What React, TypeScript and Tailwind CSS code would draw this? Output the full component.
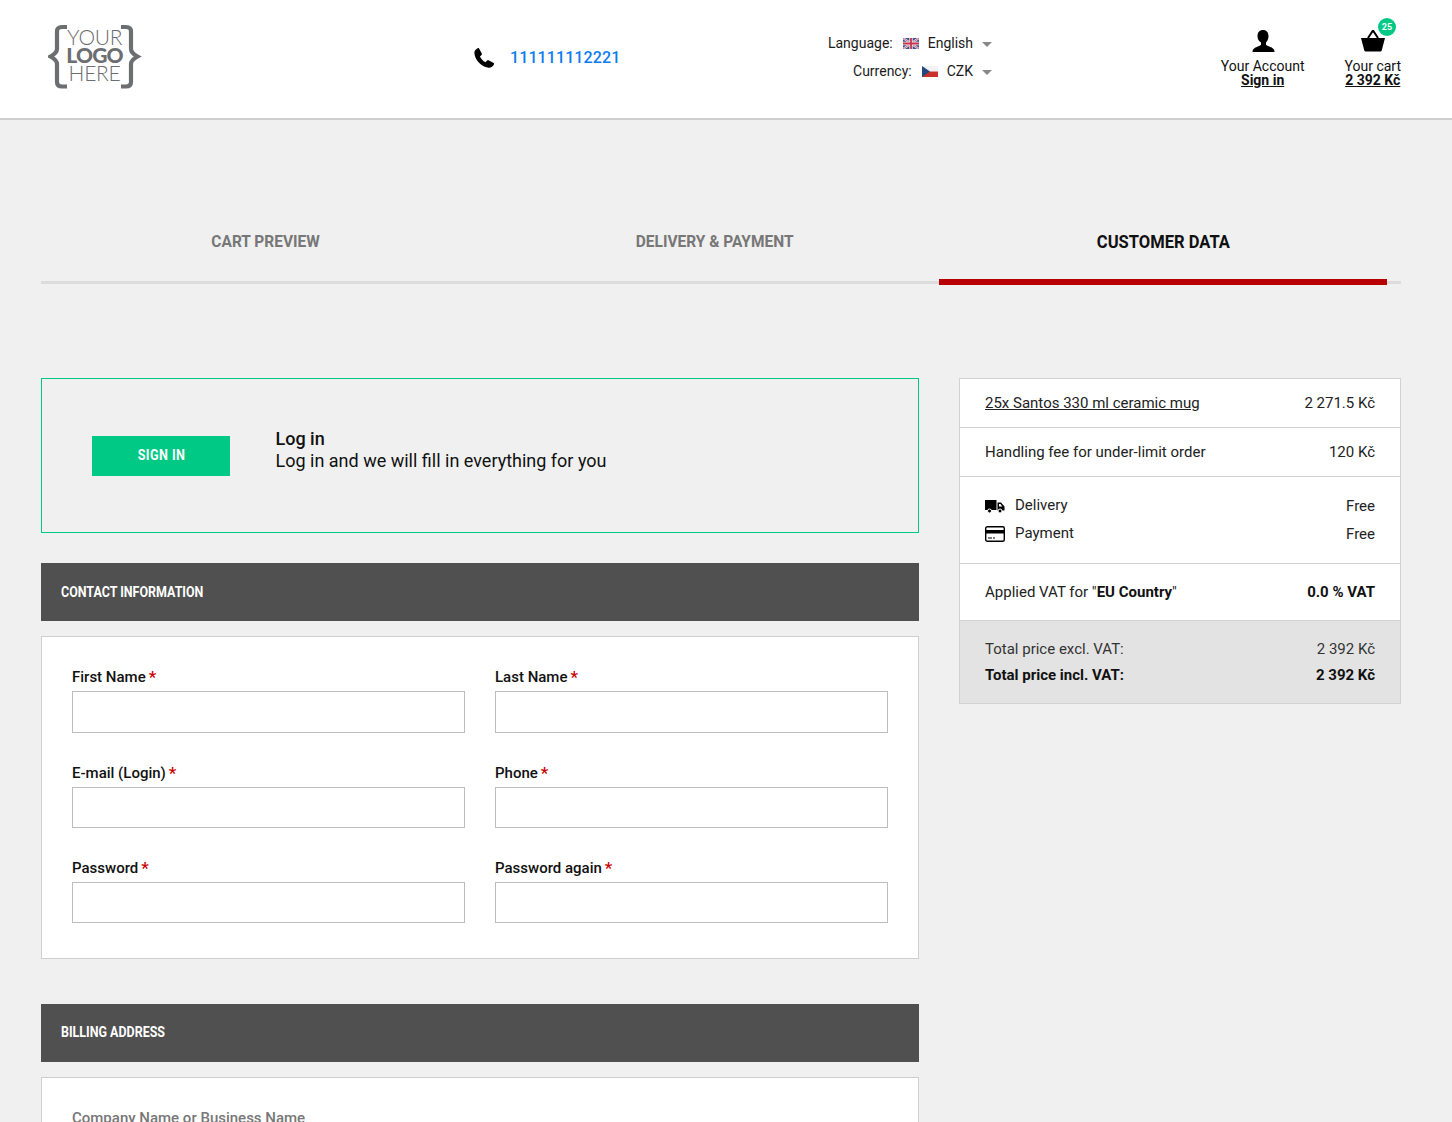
const headingFont = "font-['Roboto',sans-serif] font-bold";

function Logo() {
  return (
    <div className="relative w-[94px] h-[66px] text-[#6d6e71] font-['Lato',sans-serif] text-center">
      <svg className="absolute left-0 top-0" width="94" height="66" viewBox="0 0 94 66" fill="none" stroke="#6d6e71" strokeWidth="4.200">
        <path d="M19 3h-5c-3 0-5 1.500-5 4.500v17.500c0 3-2 5-6.500 7.500 4.500 2.500 6.500 4.500 6.500 7.500v18c0 3 2 4.500 5 4.500h5" />
        <path d="M73 3h5c3 0 5 1.500 5 4.500v17.500c0 3 2 5 6.500 7.500-4.500 2.500-6.500 4.500-6.500 7.500v18c0 3-2 4.500-5 4.500h-5" />
      </svg>
      <div className="pt-[4px] pr-[1px] text-[21px] leading-[18px] tracking-[-0.3px]">
        <div className="font-light">YOUR</div>
        <div className="font-black tracking-[-0.8px]">LOGO</div>
        <div className="font-light">HERE</div>
      </div>
    </div>
  );
}

function UkFlag() {
  return (
    <svg width="16" height="11" viewBox="0 0 16 11">
      <rect width="16" height="11" fill="#3d4f8f" />
      <path d="M0 0l16 11M16 0L0 11" stroke="#e8e8ee" strokeWidth="2.200" />
      <path d="M0 0l16 11M16 0L0 11" stroke="#c8445a" strokeWidth="0.800" />
      <path d="M8 0v11M0 5.500h16" stroke="#e8e8ee" strokeWidth="3.400" />
      <path d="M8 0v11M0 5.500h16" stroke="#c8344a" strokeWidth="1.800" />
    </svg>
  );
}

function CzFlag() {
  return (
    <svg width="16" height="11" viewBox="0 0 16 11">
      <rect width="16" height="5.500" fill="#f2f2f4" />
      <rect y="5.500" width="16" height="5.500" fill="#c9302c" />
      <path d="M0 0l8 5.500L0 11z" fill="#23487f" />
    </svg>
  );
}

function Caret() {
  return <span className="ml-[9px] mt-[2px] w-0 h-0 border-x-[5px] border-x-transparent border-t-[5px] border-t-[#888]" />;
}

function Header() {
  return (
    <header className="h-[120px] bg-white border-b-2 border-[#cfcfcf] pl-[48px] pr-[51px] flex items-start">
      <div className="w-[425px] pt-[24px]">
        <Logo />
      </div>
      <div className="w-[340px] pt-[47px] flex items-start">
        <svg width="22" height="22" viewBox="0 0 24 24" fill="#000">
          <path d="M6.600 1.500l3 5.600c.3.600.2 1.200-.3 1.700L7.600 10.400c1.200 2.700 3.300 4.900 6 6.200l1.700-1.800c.4-.5 1.100-.6 1.700-.3l5.500 2.900c.6.300.7.900.4 1.400-1 2.200-3 3.700-5.500 3.700C9.800 22.500 1.500 13.800 1.500 6.300c0-2 1.200-3.900 3.600-5 .6-.3 1.200-.2 1.500.2z" />
        </svg>
        <a className="ml-[15px] mt-[1px] text-[16px] leading-[20px] font-medium text-[#0d7bf2] tracking-[0.1px]">111111112221</a>
      </div>
      <div className="w-[179px] pt-[34px] text-[14px] text-[#1a1a1a] flex flex-col items-end gap-[10px] leading-[18px]">
        <div className="flex items-center">
          <span>Language:</span>
          <span className="ml-[10px]"><UkFlag /></span>
          <span className="ml-[9px]">English</span>
          <Caret />
        </div>
        <div className="flex items-center">
          <span>Currency:</span>
          <span className="ml-[10px]"><CzFlag /></span>
          <span className="ml-[9px]">CZK</span>
          <Caret />
        </div>
      </div>
      <div className="flex-1 flex justify-end gap-[40px] pt-[30px] text-[14px] leading-[14px] text-center text-[#111]">
        <div className="flex flex-col items-center">
          <svg width="24" height="24" viewBox="0 1 24 24" fill="#000">
            <path d="M12 1c3.600 0 5.500 2.500 5.500 6 0 2.800-1 5.200-2.500 6.600v1.900c0 1 3.600 1.900 6.600 3.700 1.300.8 1.900 2 1.900 3.800H1.500c0-1.800.6-3 1.900-3.800 3-1.800 6.600-2.700 6.600-3.700v-1.900C7.500 12.200 6.500 9.800 6.500 7c0-3.500 1.900-6 5.500-6z" />
          </svg>
          <div className="mt-[5px]">Your Account</div>
          <a className="font-bold underline">Sign in</a>
        </div>
        <div className="relative flex flex-col items-center">
          <svg width="26" height="24" viewBox="0 2 26 24" fill="#000">
            <path d="M8 10l5-7.500L18 10" fill="none" stroke="#000" strokeWidth="2" />
            <path d="M1 10h24l-3.300 12.500c-.2.700-.7 1-1.300 1H5.600c-.6 0-1.100-.3-1.300-1z" />
          </svg>
          <div className="mt-[5px]">Your cart</div>
          <a className="font-bold underline">2 392 Kč</a>
          <span className="absolute top-[-12px] right-[5px] w-[18px] h-[18px] rounded-full bg-[#00c985] text-white text-[9px] font-bold leading-[18px]">25</span>
        </div>
      </div>
    </header>
  );
}

function Tabs() {
  const tabs = ["CART PREVIEW", "DELIVERY & PAYMENT", "CUSTOMER DATA"];
  return (
    <div className="mt-[91px] border-b-[3px] border-[#dcdcdc] flex h-[73px]">
      {tabs.map((t, i) => (
        <div
          key={t}
          className={`h-[74px] flex items-center justify-center ${headingFont} ${
            i === 2
              ? "w-[448px] border-b-[6px] border-[#b80000] pb-[8px] text-[#111] text-[18px]"
              : "w-[449px] pb-[13px] text-[#777] text-[17px]"
          }`}
        >
          <span className={i === 2 ? "scale-x-[0.92]" : "scale-x-[0.91]"}>{t}</span>
        </div>
      ))}
    </div>
  );
}

function Field({ label }: { label: string }) {
  return (
    <div>
      <div className="h-[20px] text-[15px] font-medium leading-[20px] text-[#111] flex">
        {label}
        <span className="ml-[3px] text-[17px] leading-[20px] text-[#c00]">*</span>
      </div>
      <div className="mt-[4px] h-[41.400px] border border-[#bdbdbd] bg-white" />
    </div>
  );
}

function SectionBar({ title }: { title: string }) {
  return (
    <div className={`h-[58px] bg-[#505050] flex items-center pl-[20px] text-white text-[14px] ${headingFont}`}>
      <span className="origin-left scale-x-[0.89]">{title}</span>
    </div>
  );
}

function ContactForm() {
  return (
    <div className="mt-[15px] bg-white border border-[#cfcfcf] pt-[30.200px] px-[30px] pb-[34.600px] grid grid-cols-2 gap-x-[30px] gap-y-[30px]">
      <Field label="First Name" />
      <Field label="Last Name" />
      <Field label="E-mail (Login)" />
      <Field label="Phone" />
      <Field label="Password" />
      <Field label="Password again" />
    </div>
  );
}

function Summary() {
  return (
    <aside className="w-[442px] h-[326px] border border-[#d2d2d2] bg-white text-[15px] text-[#222]">
      <div className="h-[49px] flex items-center justify-between px-[25px] border-b border-[#d2d2d2]">
        <a className="underline">25x Santos 330 ml ceramic mug</a>
        <span>2 271.5 Kč</span>
      </div>
      <div className="h-[49px] flex items-center justify-between px-[25px] border-b border-[#d2d2d2]">
        <span>Handling fee for under-limit order</span>
        <span>120 Kč</span>
      </div>
      <div className="h-[87px] flex flex-col justify-center gap-[6px] px-[25px] border-b border-[#d2d2d2]">
        <div className="h-[22px] flex items-center justify-between">
          <div className="flex items-center -mt-[2px]">
            <svg width="20" height="15" viewBox="0 0 20 15" fill="#000" className="mr-[10px] mt-[2px]">
              <path d="M0 1h11.500v10H0zM12.500 3.500h3.500l3.500 4V11.500h-7z" />
              <path d="M14 5h1.500l1.800 2.500H14z" fill="#fff" />
              <circle cx="4.500" cy="12" r="2" stroke="#fff" />
              <circle cx="15" cy="12" r="2" stroke="#fff" />
            </svg>
            <span>Delivery</span>
          </div>
          <span>Free</span>
        </div>
        <div className="h-[22px] flex items-center justify-between">
          <div className="flex items-center -mt-[2px]">
            <svg width="20" height="16" viewBox="0 0 20 16" className="mr-[10px] mt-[2px]">
              <rect x="0.700" y="0.700" width="18.600" height="14.600" rx="1.500" fill="#fff" stroke="#000" strokeWidth="1.400" />
              <rect x="1" y="4" width="18" height="3.500" fill="#000" />
              <rect x="3" y="11.500" width="4" height="1" fill="#000" />
              <rect x="8" y="11.500" width="2" height="1" fill="#000" />
            </svg>
            <span>Payment</span>
          </div>
          <span>Free</span>
        </div>
      </div>
      <div className="h-[57px] flex items-center justify-between px-[25px] border-b border-[#d2d2d2]">
        <span>
          Applied VAT for "<b className="font-bold text-[#111]">EU Country</b>"
        </span>
        <b className="font-bold text-[#111]">0.0 % VAT</b>
      </div>
      <div className="h-[82px] bg-[#e3e3e3] px-[25px] pt-[15px] leading-[26px]">
        <div className="flex justify-between text-[#333]">
          <span>Total price excl. VAT:</span>
          <span>2 392 Kč</span>
        </div>
        <div className="flex justify-between font-bold text-[#111]">
          <span>Total price incl. VAT:</span>
          <span>2 392 Kč</span>
        </div>
      </div>
    </aside>
  );
}

export default function App() {
  return (
    <div className="h-[1122px] overflow-hidden bg-[#f0f0f0] font-['Roboto',sans-serif]">
      <Header />
      <div className="pl-[41px] pr-[51px]">
        <Tabs />
        <div className="mt-[94px] flex justify-between items-start">
          <main className="w-[878px]">
            <div className="h-[155px] border border-[#00c985] flex items-center pl-[50px]">
              <button className={`w-[138px] h-[40px] pl-[1px] bg-[#00c985] text-white text-[14px] tracking-[0.5px] ${headingFont}`}>
                <span className="inline-block scale-x-[0.9]">SIGN IN</span>
              </button>
              <div className="ml-[45.500px] pb-[12px] text-[18px] leading-[22px] text-[#111]">
                <div className="font-medium">Log in</div>
                <div>Log in and we will fill in everything for you</div>
              </div>
            </div>
            <div className="mt-[30px]">
              <SectionBar title="CONTACT INFORMATION" />
            </div>
            <ContactForm />
            <div className="mt-[45px]">
              <SectionBar title="BILLING ADDRESS" />
            </div>
            <div className="mt-[15px] bg-white border border-[#cfcfcf] pt-[30px] px-[30px] h-[200px]">
              <div className="text-[15px] font-medium leading-[20px] text-[#777]">Company Name or Business Name</div>
            </div>
          </main>
          <Summary />
        </div>
      </div>
    </div>
  );
}
